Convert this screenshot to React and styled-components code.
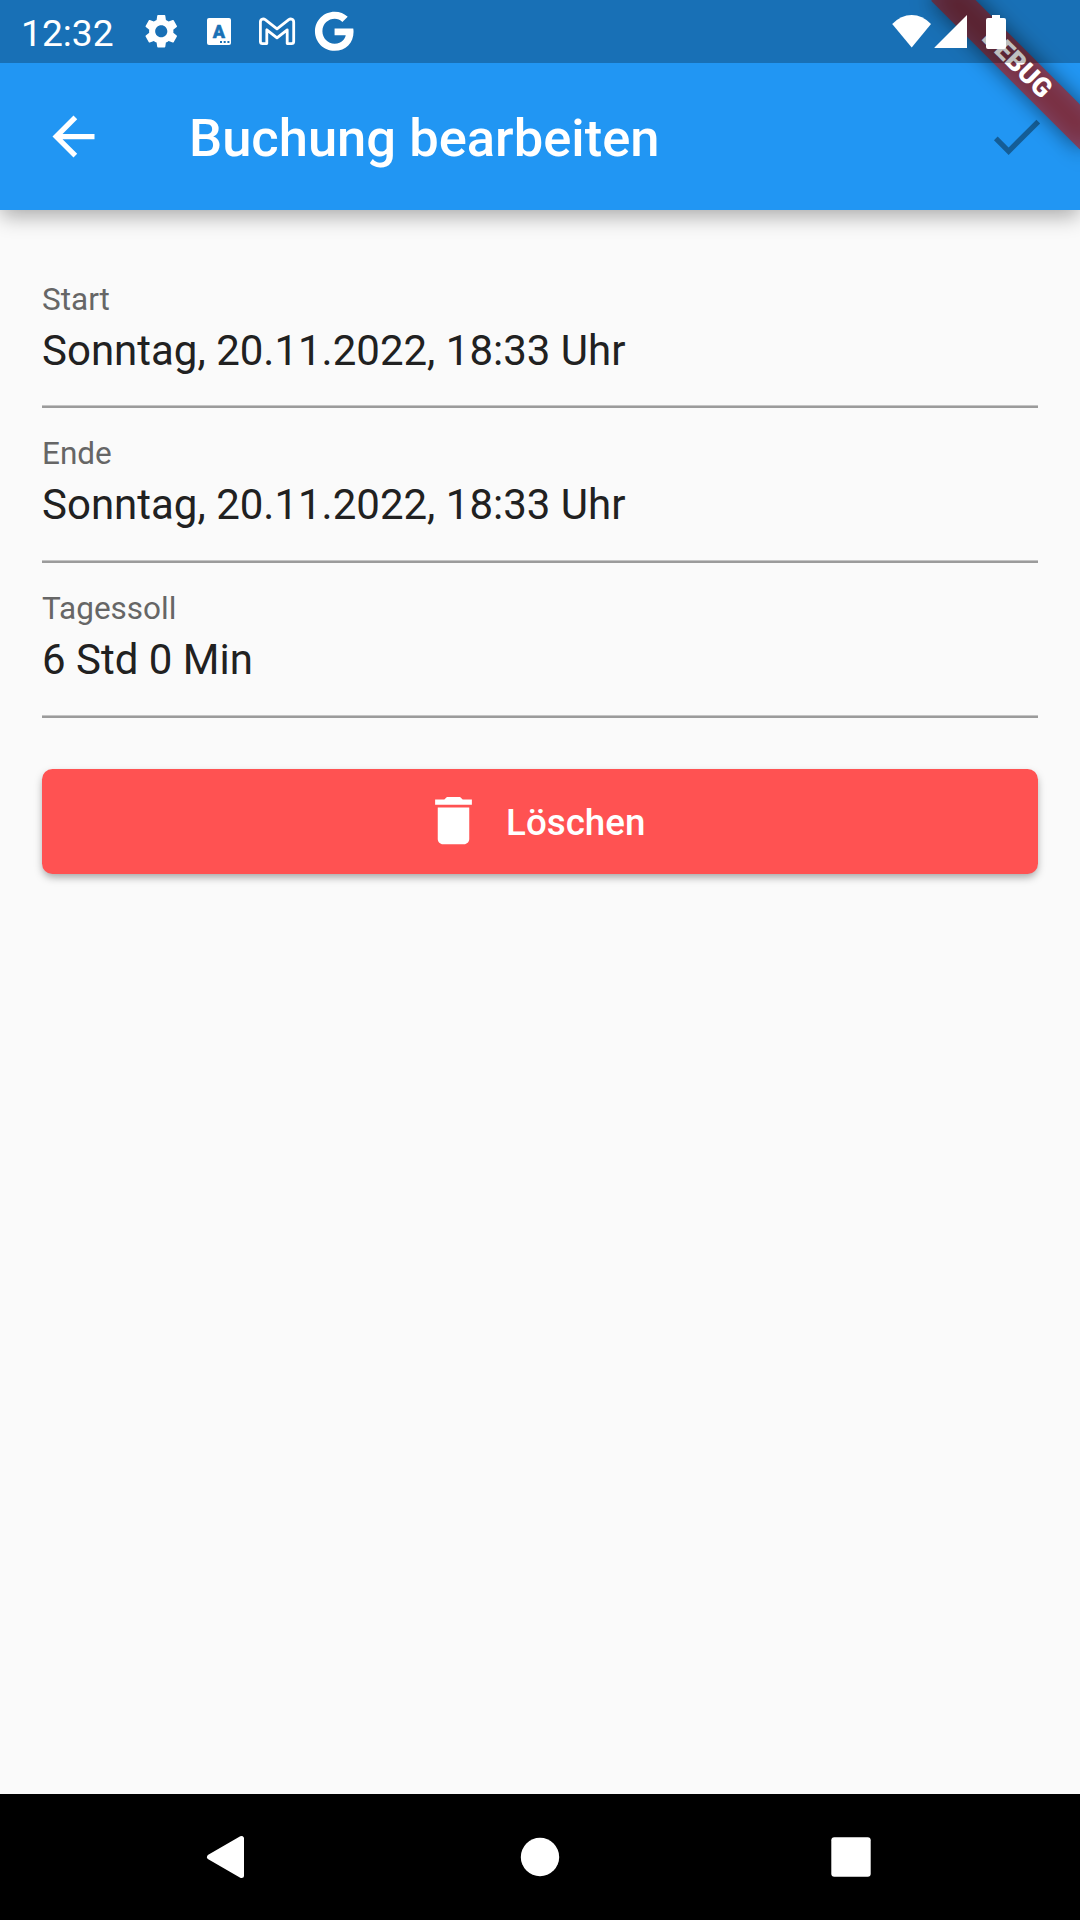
import React from 'react';
import styled, { createGlobalStyle } from 'styled-components';
import { MdArrowBack, MdCheck, MdDelete, MdSettings } from 'react-icons/md';
import { FaGoogle } from 'react-icons/fa';

const GlobalStyle = createGlobalStyle`
  *, *::before, *::after { box-sizing: border-box; }
  body {
    margin: 0;
    background: #fafafa;
    font-family: Roboto, "Noto Sans", sans-serif;
  }
  svg { display: block; flex: none; }
`;

const Screen = styled.div`
  position: relative;
  display: flex;
  flex-direction: column;
  width: 1080px;
  height: 1920px;
  overflow: hidden;
  background: #fafafa;
`;

const Header = styled.header`
  flex: none;
  padding-top: 63px;
  background: #2196f3;
  box-shadow: 0 7px 20px -1px rgba(0, 0, 0, 0.33);
`;

const AppBar = styled.div`
  display: flex;
  align-items: center;
  height: 147px;
  padding: 0 32px 0 42px;
  color: #fff;
`;

const Title = styled.h1`
  flex: 1;
  margin: 2px 0 0 84px;
  font-size: 52.5px;
  font-weight: 500;
  line-height: 62px;
  white-space: nowrap;
`;

const IconButton = styled.button`
  display: flex;
  padding: 0;
  border: 0;
  background: none;
  font-size: 63px;
  color: ${(p) => (p.disabled ? 'rgba(0, 0, 0, 0.38)' : '#fff')};
`;

/* System status bar, laid over the app bar and the debug banner */
const StatusBar = styled.div`
  position: absolute;
  inset: 0 0 auto 0;
  display: flex;
  align-items: center;
  justify-content: space-between;
  height: 63px;
  padding: 0 73px 0 21px;
  background: rgba(0, 0, 0, 0.25);
  color: #fff;
`;

const StatusGroup = styled.div`
  display: flex;
  align-items: center;
`;

const Clock = styled.span`
  width: 120px;
  margin-top: 3px;
  font-size: 37.2px;
  line-height: 44px;
  white-space: nowrap;
`;

const BannerAnchor = styled.div`
  position: absolute;
  top: 73.5px;
  left: 975px;
  width: 210px;
  height: 31.5px;
  transform: rotate(45deg);
  transform-origin: 105px -73.5px;
`;

const BannerShadow = styled.div`
  position: absolute;
  inset: 0;
  background: rgba(0, 0, 0, 0.5);
  filter: blur(10.4px);
`;

const BannerLabel = styled.div`
  position: relative;
  height: 31.5px;
  background: rgba(183, 28, 28, 0.627);
  color: #fff;
  font-size: 26.775px;
  font-weight: 900;
  line-height: 31.5px;
  text-align: center;
`;

const Form = styled.main`
  flex: 1;
  display: flex;
  flex-direction: column;
  padding: 70.55px 42px 0;
`;

const Field = styled.div`
  display: flex;
  flex-direction: column;
  height: 154.875px;
  color: #212121;
`;

const Label = styled.span`
  font-size: 31.5px;
  line-height: 37px;
  color: #666;
`;

const Value = styled.span`
  margin-top: 8px;
  font-size: 42px;
  line-height: 49px;
  white-space: nowrap;
`;

const Rule = styled.div`
  height: 3px;
  margin-top: 30.4px;
  background: linear-gradient(#c4c4c4 1px, #9b9b9b 1px);
`;

const DeleteButton = styled.button`
  display: flex;
  align-items: center;
  justify-content: center;
  gap: 21px;
  height: 105px;
  margin-top: 23.5px;
  padding: 0 44px 0 31.5px;
  border: 0;
  border-radius: 10.5px;
  background: #ff5252;
  box-shadow: 0 4px 8px -1px rgba(0, 0, 0, 0.36);
  color: #fff;
  font-family: inherit;
  font-size: 36.75px;
  font-weight: 500;
  svg { font-size: 63px; margin-bottom: 1px; }
`;

const ButtonText = styled.span`
  padding-top: 2px;
`;

const NavBar = styled.nav`
  flex: none;
  display: flex;
  align-items: center;
  justify-content: space-between;
  height: 126px;
  padding: 0 208px 0 206px;
  background: #000;
`;

const HomeIcon = styled.svg`
  margin-left: 2px;
`;

const KeyboardBadge = styled.svg`
  margin-left: 25.5px;
`;

function StatusIcons() {
  return (
    <StatusGroup>
      <svg width="40" height="34" viewBox="0 0 40 34">
        <path fill="#fff" d="M.2 9Q9 0 19.700 0t19.300 9L19.700 32.400z" />
      </svg>
      <svg width="53" height="34" viewBox="0 0 53 34">
        <path fill="#fff" d="M2.500 33V32.500L35 0v33z" />
      </svg>
      <svg width="22" height="34" viewBox="0 0 22 34">
        <path fill="#fff" d="M7 0h8v3h4q2 0 2 2v27q0 2-2 2H3q-2 0-2-2V5q0-2 2-2h4z" />
      </svg>
    </StatusGroup>
  );
}

function NotificationIcons() {
  return (
    <>
      <MdSettings size={40.5} />
      <KeyboardBadge width="24" height="27" viewBox="0 0 24 27">
        <rect width="24" height="27" rx="2" fill="#fff" />
        <text x="12" y="19.500" textAnchor="middle" fontFamily="Roboto" fontWeight="900" fontSize="18" fill="#1971b6" stroke="#1971b6" strokeWidth=".5" strokeLinejoin="round">A</text>
        <path fill="#1971b6" d="M13 23h2v2h-2zm3.700 0h2v2h-2zm3.700 0h2v2h-2z" />
      </KeyboardBadge>
      <svg width="83" height="34" viewBox="0 0 83 34">
        <path
          fill="none" stroke="#fff" strokeWidth="2.800" strokeLinejoin="round"
          d="M29.400 7Q29.400 4.600 31.500 4.100Q33 3.800 34.200 4.700L46 13.800L57.800 4.700Q59 3.800 60.500 4.100Q62.700 4.600 62.700 7V26.500Q62.700 28.600 60.500 28.600H56.200V14.800L46 22.800L35.800 14.800V28.600H31.500Q29.400 28.600 29.400 26.500Z"
        />
      </svg>
      <FaGoogle size={40.5} />
    </>
  );
}

const fields = [
  { label: 'Start', value: 'Sonntag, 20.11.2022, 18:33 Uhr' },
  { label: 'Ende', value: 'Sonntag, 20.11.2022, 18:33 Uhr' },
  { label: 'Tagessoll', value: '6 Std 0 Min' },
];

export default function App() {
  return (
    <>
      <GlobalStyle />
      <Screen>
        <Header>
          <AppBar>
            <IconButton aria-label="Zurück"><MdArrowBack /></IconButton>
            <Title>Buchung bearbeiten</Title>
            <IconButton aria-label="Speichern" disabled><MdCheck /></IconButton>
          </AppBar>
        </Header>
        <Form>
          {fields.map((f) => (
            <Field key={f.label}>
              <Label>{f.label}</Label>
              <Value>{f.value}</Value>
              <Rule />
            </Field>
          ))}
          <DeleteButton><MdDelete /><ButtonText>Löschen</ButtonText></DeleteButton>
        </Form>
        <NavBar>
          <svg width="40" height="44" viewBox="0 0 40 44">
            <path fill="#fff" stroke="#fff" strokeWidth="5" strokeLinejoin="round" d="M3.500 22L35.500 3.500V40.500z" />
          </svg>
          <HomeIcon width="40" height="40" viewBox="0 0 40 40"><circle cx="20" cy="20" r="19.200" fill="#fff" /></HomeIcon>
          <svg width="41" height="40" viewBox="0 0 41 40"><rect x=".3" y=".3" width="39.400" height="39.400" rx="3" fill="#fff" /></svg>
        </NavBar>
        <BannerAnchor>
          <BannerShadow />
          <BannerLabel>DEBUG</BannerLabel>
        </BannerAnchor>
        <StatusBar>
          <StatusGroup>
            <Clock>12:32</Clock>
            <NotificationIcons />
          </StatusGroup>
          <StatusIcons />
        </StatusBar>
      </Screen>
    </>
  );
}
